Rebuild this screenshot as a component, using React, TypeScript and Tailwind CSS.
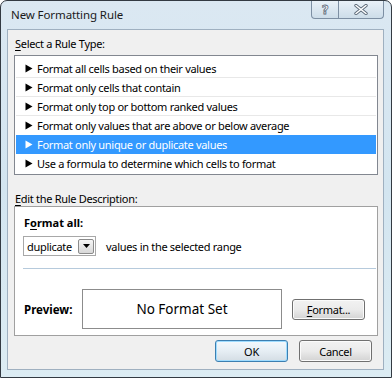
import React from 'react';

const RULES = [
  'Format all cells based on their values',
  'Format only cells that contain',
  'Format only top or bottom ranked values',
  'Format only values that are above or below average',
  'Format only unique or duplicate values',
  'Use a formula to determine which cells to format',
];
const SELECTED = 4;

function Arrow({ white }: { white?: boolean }) {
  return (
    <svg width="8" height="9" viewBox="0 0 8 9" className="shrink-0">
      <path d="M0.5 0.5 L7.5 4.5 L0.5 8.5 Z" fill={white ? '#ffffff' : '#000000'} />
    </svg>
  );
}

function WinButton({ children, focused, className = '' }: { children: React.ReactNode; focused?: boolean; className?: string }) {
  return (
    <div
      className={`w-[73px] flex items-center justify-center rounded-[3px] border ${
        focused
          ? 'border-[#3c7fb1] shadow-[inset_0_0_0_1px_#9fdcff] bg-gradient-to-b from-[#f4f9fd] via-[#e6eef4] to-[#d4dde4]'
          : 'border-[#707070] shadow-[inset_0_0_0_1px_#fbfbfb] bg-gradient-to-b from-[#f2f2f2] via-[#ebebeb] to-[#d3d3d3]'
      } ${className}`}
    >
      {children}
    </div>
  );
}

export default function App() {
  return (
    <div className="w-[392px] h-[378px] border border-[#333a42] rounded-t-[7px] bg-gradient-to-b from-[#dbe8f2] via-[#d3e5f0] to-[#dcecf3] font-['Noto_Sans',sans-serif] text-[11px] leading-[15px] tracking-[-0.3px] text-black overflow-hidden">
      {/* Title bar */}
      <div className="h-[28px] flex items-start">
        <span className="ml-[10px] mt-[6px] text-[11.5px] tracking-[-0.1px] text-[#1a1a1a]">New Formatting Rule</span>
        <div className="ml-auto mr-[7px] flex h-[18px]">
          <div className="w-[28px] h-full border border-t-0 border-[#7d8fa3] rounded-bl-[4px] bg-gradient-to-b from-[#e9f1f8] to-[#cddde9] flex items-center justify-center">
            <span className="font-['DejaVu_Sans',sans-serif] font-bold text-[12px] text-white [-webkit-text-stroke:0.8px_#5d6b7a] leading-none">?</span>
          </div>
          <div className="w-[45px] h-full border border-t-0 border-l-0 border-[#7d8fa3] rounded-br-[4px] bg-gradient-to-b from-[#e9f1f8] to-[#cddde9] flex items-center justify-center">
            <svg width="14" height="11" viewBox="0 0 14 11">
              <path d="M2 1.5 L12 9.5 M12 1.5 L2 9.5" stroke="#5d6b7a" strokeWidth="3.4" strokeLinecap="round" />
              <path d="M2 1.5 L12 9.5 M12 1.5 L2 9.5" stroke="#ffffff" strokeWidth="1.6" strokeLinecap="round" />
            </svg>
          </div>
        </div>
      </div>

      {/* Client area */}
      <div className="ml-[6px] mr-[7px] h-[341px] bg-[#f0f0f0] border border-[#9fb0c0] flex flex-col pl-[6px] pr-[5px]">
        <div className="pt-[6px] pl-[1px]">
          <span className="underline underline-offset-2">S</span>elect a Rule Type:
        </div>

        {/* Rule list */}
        <div className="mt-[4px] h-[120px] bg-white border border-[#828790] px-[1px] pt-[3px] pb-[1px]">
          {RULES.map((r, i) => (
            <div
              key={r}
              className={`h-[19px] flex items-center gap-[4px] pl-[9px] ${
                i === SELECTED
                  ? 'bg-[#3399ff] text-white'
                  : i < RULES.length - 1 && i !== SELECTED - 1
                  ? 'border-b border-[#e8e8e8]'
                  : ''
              }`}
            >
              <Arrow white={i === SELECTED} />
              <span>{r}</span>
            </div>
          ))}
        </div>

        <div className="mt-[16px] pl-[1px]">
          <span className="underline underline-offset-2">E</span>dit the Rule Description:
        </div>

        {/* Description box */}
        <div className="h-[130px] bg-white border border-[#a0a0a0] pl-[8px] pr-[1px] pt-[8px] flex flex-col">
          <div className="ml-[1px] font-bold tracking-normal">
            F<span className="underline underline-offset-2">o</span>rmat all:
          </div>
          <div className="mt-[6px] flex items-center">
            <div className="w-[73px] h-[20px] border border-[#a8a8a8] flex items-center pl-[3px] pr-[1px]">
              <span>duplicate</span>
              <div className="ml-auto w-[16px] h-[15px] border border-[#8b8b8b] rounded-[2px] bg-gradient-to-b from-[#f6f6f6] to-[#d8d8d8] flex items-center justify-center">
                <svg width="7" height="4" viewBox="0 0 7 4">
                  <path d="M0 0 L7 0 L3.5 4 Z" fill="#000" />
                </svg>
              </div>
            </div>
            <span className="ml-[10px]">values in the selected range</span>
          </div>
          <div className="mt-[12px] h-px bg-[#b6cadc]" />
          <div className="mt-[20px] flex items-center">
            <div className="w-[59px] pl-[1px] font-bold text-[11.5px] tracking-normal">Preview:</div>
            <div className="w-[200px] h-[40px] border border-[#8c8c8c] flex items-center justify-center text-[13.5px] tracking-normal">
              No Format Set
            </div>
            <WinButton className="ml-[10px] h-[21px]">
              <span>
                <span className="underline underline-offset-2">F</span>ormat...
              </span>
            </WinButton>
          </div>
        </div>

        {/* Dialog buttons */}
        <div className="mt-[4px] mr-[6px] flex justify-end gap-[11px]">
          <WinButton focused className="h-[22px]">OK</WinButton>
          <WinButton className="h-[22px]">Cancel</WinButton>
        </div>
      </div>
    </div>
  );
}
